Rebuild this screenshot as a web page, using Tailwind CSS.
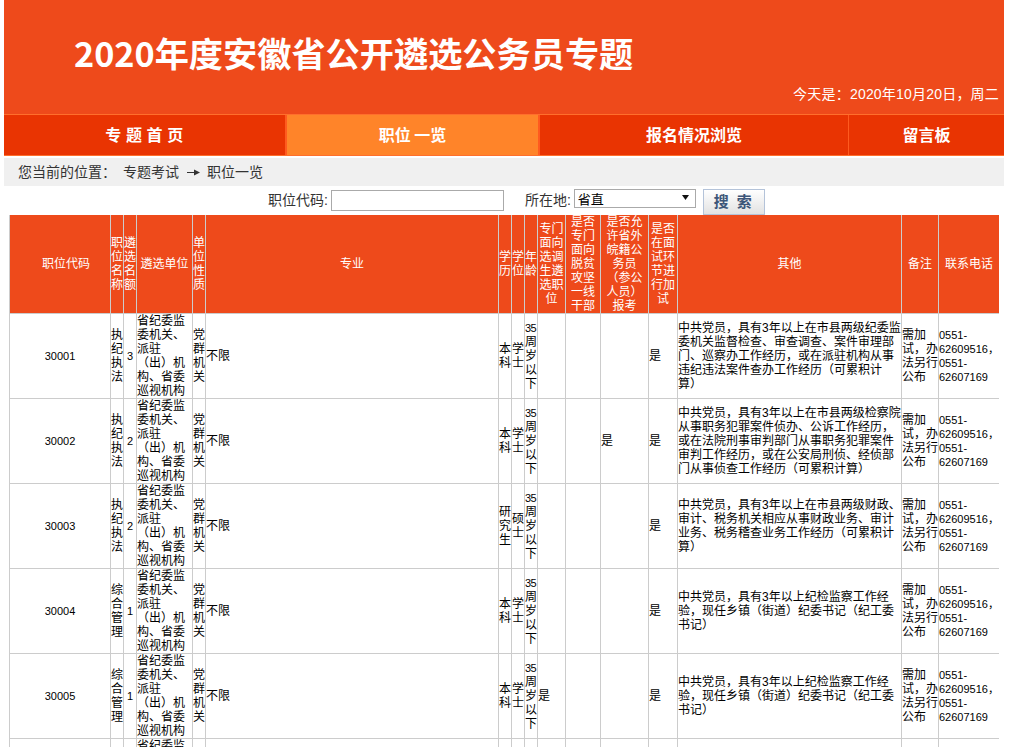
<!DOCTYPE html>
<html lang="zh-CN">

<head>
  <meta charset="UTF-8">
  <meta name="viewport" content="width=device-width, initial-scale=1">
  <title>2020年度安徽省公开遴选公务员专题</title>
  <script src="https://cdn.jsdelivr.net/npm/@tailwindcss/browser@4"></script>
</head>

<body class="bg-white h-screen overflow-hidden font-['Liberation_Sans','Noto_Sans_CJK_SC',sans-serif] text-black [text-spacing-trim:space-all]">

  <div class="ml-[4px] w-[1000px]">

    <div class="h-[114px] bg-[#ee4a1b] text-white flex flex-col">
      <h1 class="pl-[70px] pt-[27px] h-[82px] text-[34.2px] leading-[50px] font-bold font-['Noto_Sans_CJK_SC',sans-serif]">2020年度安徽省公开遴选公务员专题</h1>
      <p class="pr-[5px] text-right text-[14px] tracking-[0.2px] leading-[24px]">今天是：2020年10月20日，周二</p>
    </div>

    <nav class="h-[42px] flex border-y border-[#ff6f2c] bg-[#e93402] text-white text-[16px] font-bold font-['Noto_Sans_CJK_SC',sans-serif] leading-[39px] text-center">
      <a class="w-[283px] border-r-2 border-[#ff5a1f] tracking-[0.5px]">专 题 首 页</a>
      <a class="w-[251px] bg-[#ff8429]">职位 一览</a>
      <a class="w-[311px] border-l-2 border-r border-[#ff5a1f]">报名情况浏览</a>
      <a class="flex-1">留言板</a>
    </nav>

    <div class="mt-[2px] h-[28px] bg-[#f0f0f0] pl-[14px] flex items-center text-[14px] text-[#333]">
      <span class="w-[105px]">您当前的位置：</span>
      <span>专题考试</span>
      <span class="w-[28px] flex justify-center">
        <svg width="13" height="7" viewBox="0 0 13 7" class="mt-[1px]">
          <path d="M0 3h8v1H0z" fill="#333" />
          <path d="M7 0.5L13 3.5L7 6.5z" fill="#333" />
        </svg>
      </span>
      <span>职位一览</span>
    </div>

    <form class="h-[29px] pl-[264px] flex items-start text-[14px] text-[#333]">
      <label class="mt-[4px] leading-[20px]">职位代码:</label>
      <input type="text" class="mt-[4px] ml-[3px] w-[173px] h-[21px] border border-[#aaa] bg-white">
      <label class="mt-[4px] ml-[21px] leading-[20px]">所在地:</label>
      <div class="relative mt-[3px] ml-[3px] w-[122px] h-[19px]">
        <select class="w-full h-full appearance-none pl-[3px] border border-[#aaa] bg-white text-[13px] text-black">
          <option>省直</option>
        </select>
        <svg width="7" height="5" viewBox="0 0 7 5" class="absolute right-[7px] top-[6px] pointer-events-none">
          <path d="M0 0h7L3.5 5z" fill="#111" />
        </svg>
      </div>
      <button type="button" class="mt-[3px] ml-[7px] w-[62px] h-[26px] border border-[#b4c3d9] bg-linear-to-b from-white to-[#e2e2e2] text-[15px] tracking-[2px] text-[#3d5679] font-bold">搜 索</button>
    </form>

    <table class="ml-[5px] w-[990px] table-fixed border-separate border-spacing-0 border-l border-[#ccc] text-[12px] leading-[14px]">
      <colgroup>
        <col class="w-[101px]"><col class="w-[13px]"><col class="w-[13px]"><col class="w-[56px]">
        <col class="w-[13px]"><col class="w-[293px]"><col class="w-[13px]"><col class="w-[13px]">
        <col class="w-[13px]"><col class="w-[28px]"><col class="w-[35px]"><col class="w-[48px]">
        <col class="w-[29px]"><col class="w-[224px]"><col class="w-[37px]"><col class="w-[60px]">
      </colgroup>
      <thead class="bg-[#ee4a1b] text-white">
        <tr class="h-[99px] [&>th]:font-normal [&>th]:border-r [&>th]:border-b [&>th]:border-[#ccc] [&>th:last-child]:border-r-0">
          <th class="pl-[12px]">职位代码</th>
          <th>职位名称</th>
          <th>遴选名额</th>
          <th>遴选单位</th>
          <th>单位性质</th>
          <th>专业</th>
          <th>学历</th>
          <th>学位</th>
          <th>年龄</th>
          <th>专门面向选调生遴选职位</th>
          <th>是否专门面向脱贫攻坚一线干部</th>
          <th>是否允许省外皖籍公务员（参公人员）报考</th>
          <th>是否在面试环节进行加试</th>
          <th>其他</th>
          <th>备注</th>
          <th>联系电话</th>
        </tr>
      </thead>
      <tbody id="linhas"></tbody>
    </table>
  </div>

  <script>
    const jijian = '中共党员，具有3年以上纪检监察工作经验，现任乡镇（街道）纪委书记（纪工委书记）';

    const vagas = [
      { codigo: '30001', nome: '执纪执法', num: 3, xueli: '本科', xuewei: '学士', diaoxuan: '', waiji: '', qita: '中共党员，具有3年以上在市县两级纪委监委机关监督检查、审查调查、案件审理部门、巡察办工作经历，或在派驻机构从事违纪违法案件查办工作经历（可累积计算）' },
      { codigo: '30002', nome: '执纪执法', num: 2, xueli: '本科', xuewei: '学士', diaoxuan: '', waiji: '是', qita: '中共党员，具有3年以上在市县两级检察院从事职务犯罪案件侦办、公诉工作经历，或在法院刑事审判部门从事职务犯罪案件审判工作经历，或在公安局刑侦、经侦部门从事侦查工作经历（可累积计算）' },
      { codigo: '30003', nome: '执纪执法', num: 2, xueli: '研究生', xuewei: '硕士', diaoxuan: '', waiji: '', qita: '中共党员，具有3年以上在市县两级财政、审计、税务机关相应从事财政业务、审计业务、税务稽查业务工作经历（可累积计算）' },
      { codigo: '30004', nome: '综合管理', num: 1, xueli: '本科', xuewei: '学士', diaoxuan: '', waiji: '', qita: jijian },
      { codigo: '30005', nome: '综合管理', num: 1, xueli: '本科', xuewei: '学士', diaoxuan: '是', waiji: '', qita: jijian },
      { codigo: '30006', nome: '综合管理', num: 1, xueli: '本科', xuewei: '学士', diaoxuan: '', waiji: '', qita: jijian }
    ];

    const linhas = document.getElementById('linhas');

    vagas.forEach(v => {
      const tr = document.createElement('tr');
      tr.className = 'h-[85px] [&>td]:border-r [&>td]:border-b [&>td]:border-[#ccc] [&>td:last-child]:border-r-0';
      tr.innerHTML = `
        <td class="text-center text-[11px]">${v.codigo}</td>
        <td>${v.nome}</td>
        <td class="text-center text-[11px]">${v.num}</td>
        <td>省纪委监委机关、派驻（出）机构、省委巡视机构</td>
        <td>党群机关</td>
        <td>不限</td>
        <td>${v.xueli}</td>
        <td>${v.xuewei}</td>
        <td><span class="block text-[11px] whitespace-nowrap tracking-[-0.5px]">35</span>周岁以下</td>
        <td>${v.diaoxuan}</td>
        <td></td>
        <td>${v.waiji}</td>
        <td>是</td>
        <td>${v.qita}</td>
        <td>需加试，办法另行公布</td>
        <td class="text-[11px]">0551-<br>62609516，<br>0551-<br>62607169</td>
      `;
      linhas.appendChild(tr);
    });
  </script>

</body>

</html>
